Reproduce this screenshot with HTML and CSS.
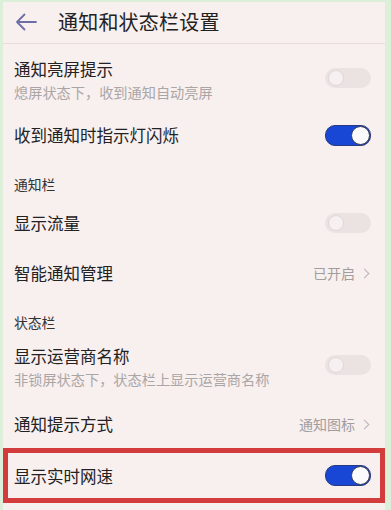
FILE: index.html
```html
<!DOCTYPE html>
<html lang="zh">
<head>
<meta charset="utf-8">
<link rel="stylesheet" href="styles.css">
</head>
<body>
<div class="screen">
  <header class="header">
    <svg class="back" width="22" height="18" viewBox="0 0 22 18"><path d="M21 9H2M9.5 1.5L2 9l7.5 7.5" fill="none" stroke="#6b6fa6" stroke-width="1.8" stroke-linecap="round" stroke-linejoin="round"/></svg>
    <h1 class="title">通知和状态栏设置</h1>
  </header>

  <div class="row two first">
    <div class="texts">
      <div class="label">通知亮屏提示</div>
      <div class="sub">熄屏状态下，收到通知自动亮屏</div>
    </div>
    <span class="switch off"></span>
  </div>
  <div class="row">
    <div class="label">收到通知时指示灯闪烁</div>
    <span class="switch on"></span>
  </div>

  <div class="section">通知栏</div>
  <div class="row">
    <div class="label">显示流量</div>
    <span class="switch off"></span>
  </div>
  <div class="row">
    <div class="label">智能通知管理</div>
    <span class="value">已开启<span class="chev"></span></span>
  </div>

  <div class="section">状态栏</div>
  <div class="row two">
    <div class="texts">
      <div class="label">显示运营商名称</div>
      <div class="sub">非锁屏状态下，状态栏上显示运营商名称</div>
    </div>
    <span class="switch off"></span>
  </div>
  <div class="row short">
    <div class="label">通知提示方式</div>
    <span class="value">通知图标<span class="chev"></span></span>
  </div>
  <div class="row highlight">
    <div class="label">显示实时网速</div>
    <span class="switch on"></span>
  </div>
</div>
</body>
</html>
```

FILE: styles.css
```css
html, body {
  margin: 0;
  padding: 0;
}
body {
  width: 391px;
  height: 510px;
  background: #dcefd9;
  padding: 2px 6px 0 3px;
  box-sizing: border-box;
  font-family: "Noto Sans CJK SC", "Noto Sans", sans-serif;
  color: #222;
  overflow: hidden;
}
.screen {
  background: #f8efef;
  height: 508px;
  display: flex;
  flex-direction: column;
}
.header {
  height: 42px;
  display: flex;
  align-items: center;
  border-bottom: 1px solid #eadcdc;
  box-sizing: border-box;
  padding-left: 12px;
}
.back {
  display: block;
  margin-top: -2px;
}
.title {
  margin: 0 0 0 21px;
  font-size: 20px;
  font-weight: 400;
  line-height: 24px;
  color: #222;
  letter-spacing: 0.2px;
  margin-top: -2px;
}
.row {
  height: 50px;
  display: flex;
  align-items: center;
  justify-content: space-between;
  padding: 0 14px 0 11px;
  flex-shrink: 0;
}
.row.short {
  height: 48px;
}
.row.two {
  height: 64px;
  align-items: flex-start;
  padding-top: 9px;
  box-sizing: border-box;
}
.row.two.first {
  height: 66px;
  padding-top: 14px;
}
.row.two .switch {
  margin-top: 10px;
}
.label {
  font-size: 16.5px;
  line-height: 22px;
  color: #222;
}
.sub {
  font-size: 14.2px;
  line-height: 20px;
  color: #aaa6a6;
  margin-top: 2px;
}
.section {
  height: 38px;
  box-sizing: border-box;
  padding: 14px 0 0 11px;
  font-size: 13.8px;
  line-height: 20px;
  color: #333;
  flex-shrink: 0;
}
.switch {
  width: 46px;
  height: 20px;
  border-radius: 10px;
  position: relative;
  flex-shrink: 0;
  box-sizing: border-box;
}
.switch::after {
  content: "";
  position: absolute;
  top: 2px;
  width: 16px;
  height: 16px;
  border-radius: 50%;
  box-sizing: border-box;
}
.switch.off {
  background: #ebe2e2;
}
.switch.off::after {
  left: 3px;
  background: #f6f0f0;
  border: 1px solid #e0d7d7;
}
.switch.on {
  background: #1747d4;
  height: 21px;
  border: 1px solid #2a3a80;
}
.switch.on::after {
  right: 0px;
  top: 0px;
  width: 19px;
  height: 19px;
  background: #fbfbfd;
  border: 1.5px solid #3a3f55;
}
.value {
  font-size: 14px;
  color: #a29d9d;
  display: flex;
  align-items: center;
}
.chev {
  width: 6px;
  height: 6px;
  border-right: 1.3px solid #bbb4b4;
  border-top: 1.3px solid #bbb4b4;
  transform: rotate(45deg);
  margin-left: 6px;
  margin-right: 3px;
}
.row.highlight {
  height: 55px;
  border: 5px solid #d23c3c;
  box-sizing: border-box;
  padding: 0 9px 0 6px;
}
```
